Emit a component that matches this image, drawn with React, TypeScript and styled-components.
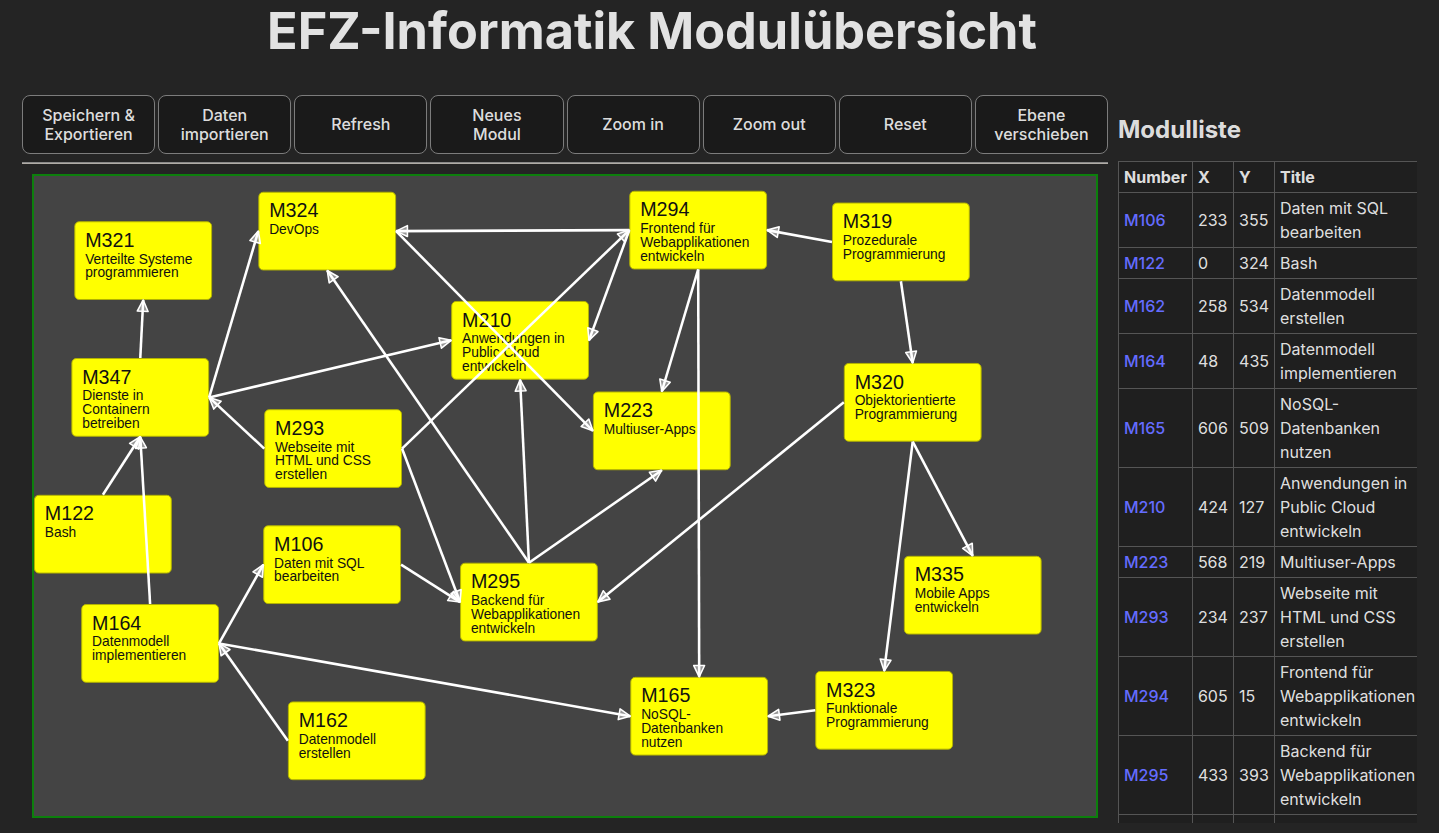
import React from 'react';
import styled, { createGlobalStyle } from 'styled-components';

type Side = 'top' | 'bottom' | 'left' | 'right';

interface Modul {
  id: string;
  x: number;
  y: number;
  title: string;
}

const NODE_W = 140;
const NODE_H = 80;

const modules: Modul[] = [
  { id: 'M106', x: 233, y: 355, title: 'Daten mit SQL bearbeiten' },
  { id: 'M122', x: 0, y: 324, title: 'Bash' },
  { id: 'M162', x: 258, y: 534, title: 'Datenmodell erstellen' },
  { id: 'M164', x: 48, y: 435, title: 'Datenmodell implementieren' },
  { id: 'M165', x: 606, y: 509, title: 'NoSQL-Datenbanken nutzen' },
  { id: 'M210', x: 424, y: 127, title: 'Anwendungen in Public Cloud entwickeln' },
  { id: 'M223', x: 568, y: 219, title: 'Multiuser-Apps' },
  { id: 'M293', x: 234, y: 237, title: 'Webseite mit HTML und CSS erstellen' },
  { id: 'M294', x: 605, y: 15, title: 'Frontend für Webapplikationen entwickeln' },
  { id: 'M295', x: 433, y: 393, title: 'Backend für Webapplikationen entwickeln' },
  { id: 'M319', x: 811, y: 27, title: 'Prozedurale Programmierung' },
  { id: 'M320', x: 823, y: 190, title: 'Objektorientierte Programmierung' },
  { id: 'M321', x: 41, y: 46, title: 'Verteilte Systeme programmieren' },
  { id: 'M323', x: 794, y: 503, title: 'Funktionale Programmierung' },
  { id: 'M324', x: 228, y: 16, title: 'DevOps' },
  { id: 'M335', x: 884, y: 386, title: 'Mobile Apps entwickeln' },
  { id: 'M347', x: 38, y: 185, title: 'Dienste in Containern betreiben' },
];

const edges: [string, Side, string, Side][] = [
  ['M347', 'top', 'M321', 'bottom'],
  ['M347', 'right', 'M324', 'left'],
  ['M347', 'right', 'M210', 'left'],
  ['M293', 'left', 'M347', 'right'],
  ['M293', 'right', 'M294', 'left'],
  ['M293', 'right', 'M295', 'left'],
  ['M294', 'left', 'M324', 'right'],
  ['M294', 'left', 'M210', 'right'],
  ['M324', 'right', 'M223', 'left'],
  ['M295', 'top', 'M324', 'bottom'],
  ['M295', 'top', 'M210', 'bottom'],
  ['M295', 'top', 'M223', 'bottom'],
  ['M294', 'bottom', 'M223', 'top'],
  ['M294', 'bottom', 'M165', 'top'],
  ['M319', 'left', 'M294', 'right'],
  ['M319', 'bottom', 'M320', 'top'],
  ['M320', 'left', 'M295', 'right'],
  ['M320', 'bottom', 'M335', 'top'],
  ['M320', 'bottom', 'M323', 'top'],
  ['M323', 'left', 'M165', 'right'],
  ['M164', 'right', 'M106', 'left'],
  ['M164', 'right', 'M165', 'left'],
  ['M162', 'left', 'M164', 'right'],
  ['M164', 'top', 'M347', 'bottom'],
  ['M122', 'top', 'M347', 'bottom'],
  ['M106', 'right', 'M295', 'left'],
];

const byId: Record<string, Modul> = Object.fromEntries(modules.map((m) => [m.id, m]));

function anchor(m: Modul, side: Side): [number, number] {
  switch (side) {
    case 'top':
      return [m.x + NODE_W / 2, m.y];
    case 'bottom':
      return [m.x + NODE_W / 2, m.y + NODE_H];
    case 'left':
      return [m.x, m.y + NODE_H / 2];
    default:
      return [m.x + NODE_W, m.y + NODE_H / 2];
  }
}

const buttons = [
  'Speichern & Exportieren',
  'Daten importieren',
  'Refresh',
  'Neues Modul',
  'Zoom in',
  'Zoom out',
  'Reset',
  'Ebene verschieben',
];

const GlobalStyle = createGlobalStyle`
  html, body {
    margin: 0;
    padding: 0;
    background: #242424;
    overflow: hidden;
  }
  body {
    font-family: Inter, "Noto Sans", system-ui, sans-serif;
    color: rgba(255, 255, 255, 0.87);
    line-height: 1.5;
    font-weight: 400;
    -webkit-font-smoothing: antialiased;
  }
  #root {
    width: 1439px;
    height: 833px;
    overflow: hidden;
  }
`;

const Page = styled.div`
  display: flex;
  flex-direction: column;
`;

const Heading = styled.h1`
  margin: 0;
  padding: 3px 135px 0 0;
  text-align: center;
  font-size: 50.4px;
  line-height: 56px;
  font-weight: 700;
  color: rgba(255, 255, 255, 0.87);
`;

const Main = styled.main`
  display: flex;
  align-items: flex-start;
  gap: 10px;
  padding: 0 22px;
  margin-top: 36px;
`;

const LeftColumn = styled.section`
  flex: 0 0 1086px;
  width: 1086px;
  min-width: 0;
  display: flex;
  flex-direction: column;
`;

const Toolbar = styled.div`
  display: flex;
  gap: 3px;
`;

const ToolButton = styled.button`
  flex: 1 1 0;
  min-width: 0;
  padding: 9.6px 17px;
  border-radius: 8px;
  border: 1px solid #7c7c7c;
  background: #1a1a1a;
  color: rgba(255, 255, 255, 0.87);
  font-family: Inter, "Noto Sans", sans-serif;
  font-size: 16px;
  font-weight: 500;
  line-height: 19px;
  cursor: pointer;
`;

const Divider = styled.hr`
  margin: 8px 0 0;
  border: 0;
  height: 2px;
  border-top: 1px solid #8a8a8a;
  border-bottom: 1px solid #b0aca6;
  box-sizing: border-box;
`;

const Canvas = styled.div`
  margin: 10px;
  height: 640px;
  min-width: 0;
  border: 2px solid #0c7f0c;
  background: #444444;
  position: relative;
  overflow: hidden;
`;

const Stage = styled.div`
  position: absolute;
  left: 0;
  top: 0;
  width: 1080px;
  height: 651px;
  transform: scale(0.984);
  transform-origin: 0 0;
`;

const Node = styled.div<{ $x: number; $y: number }>`
  position: absolute;
  left: ${(p) => p.$x}px;
  top: ${(p) => p.$y}px;
  width: ${NODE_W}px;
  height: ${NODE_H}px;
  box-sizing: border-box;
  padding: 7px 10px;
  background: #ffff00;
  border: 1px solid #b4b400;
  border-radius: 5px;
  color: #111;
  font-family: "Liberation Sans", Arial, sans-serif;
`;

const NodeNumber = styled.div`
  font-size: 20px;
  line-height: 23px;
`;

const NodeTitle = styled.div`
  font-size: 14px;
  line-height: 14px;
`;

const EdgeLayer = styled.svg`
  position: absolute;
  left: 0;
  top: 0;
  pointer-events: none;
  overflow: visible;
`;

const Sidebar = styled.aside`
  flex: 1 1 auto;
  min-width: 0;
  max-height: 728px;
  overflow: hidden;
`;

const SideTitle = styled.h2`
  margin: 17px 0 13px;
  font-size: 24px;
  line-height: 36px;
  font-weight: 700;
  color: rgba(255, 255, 255, 0.87);
`;

const Table = styled.table`
  border-collapse: collapse;
  background: #1f1f1f;
  font-size: 16px;
  line-height: 24px;
`;

const HeadCell = styled.th`
  border: 1px solid #555;
  padding: 3px 5px;
  text-align: left;
  font-weight: 700;
`;

const Cell = styled.td`
  border: 1px solid #555;
  padding: 3px 5px;
  text-align: left;
  vertical-align: middle;
`;

const ModLink = styled.a`
  color: #646cff;
  font-weight: 500;
  text-decoration: none;
`;

export default function App() {
  return (
    <Page>
      <GlobalStyle />
      <Heading>EFZ-Informatik Modulübersicht</Heading>
      <Main>
        <LeftColumn>
          <Toolbar>
            {buttons.map((b) => (
              <ToolButton key={b}>{b}</ToolButton>
            ))}
          </Toolbar>
          <Divider />
          <Canvas>
            <Stage>
              {modules.map((m) => (
                <Node key={m.id} $x={m.x} $y={m.y}>
                  <NodeNumber>{m.id}</NodeNumber>
                  <NodeTitle>{m.title}</NodeTitle>
                </Node>
              ))}
              <EdgeLayer width={1080} height={651} viewBox="0 0 1080 651">
                <defs>
                  <marker
                    id="arrow"
                    markerUnits="userSpaceOnUse"
                    markerWidth="14"
                    markerHeight="14"
                    viewBox="0 0 14 14"
                    refX="13"
                    refY="7"
                    orient="auto"
                  >
                    <path
                      d="M1.5,1.5 L13,7 L1.5,12.5 Z"
                      fill="rgba(255,255,255,0.45)"
                      stroke="#ffffff"
                      strokeWidth="1.6"
                      strokeLinejoin="round"
                    />
                  </marker>
                </defs>
                {edges.map(([from, fs, to, ts], i) => {
                  const [x1, y1] = anchor(byId[from], fs);
                  const [x2, y2] = anchor(byId[to], ts);
                  return (
                    <line
                      key={i}
                      x1={x1}
                      y1={y1}
                      x2={x2}
                      y2={y2}
                      stroke="#ffffff"
                      strokeWidth="2.6"
                      markerEnd="url(#arrow)"
                    />
                  );
                })}
              </EdgeLayer>
            </Stage>
          </Canvas>
        </LeftColumn>
        <Sidebar>
          <SideTitle>Modulliste</SideTitle>
          <Table>
            <thead>
              <tr>
                <HeadCell>Number</HeadCell>
                <HeadCell>X</HeadCell>
                <HeadCell>Y</HeadCell>
                <HeadCell>Title</HeadCell>
              </tr>
            </thead>
            <tbody>
              {modules.map((m) => (
                <tr key={m.id}>
                  <Cell>
                    <ModLink href="#">{m.id}</ModLink>
                  </Cell>
                  <Cell>{m.x}</Cell>
                  <Cell>{m.y}</Cell>
                  <Cell>{m.title}</Cell>
                </tr>
              ))}
            </tbody>
          </Table>
        </Sidebar>
      </Main>
    </Page>
  );
}
